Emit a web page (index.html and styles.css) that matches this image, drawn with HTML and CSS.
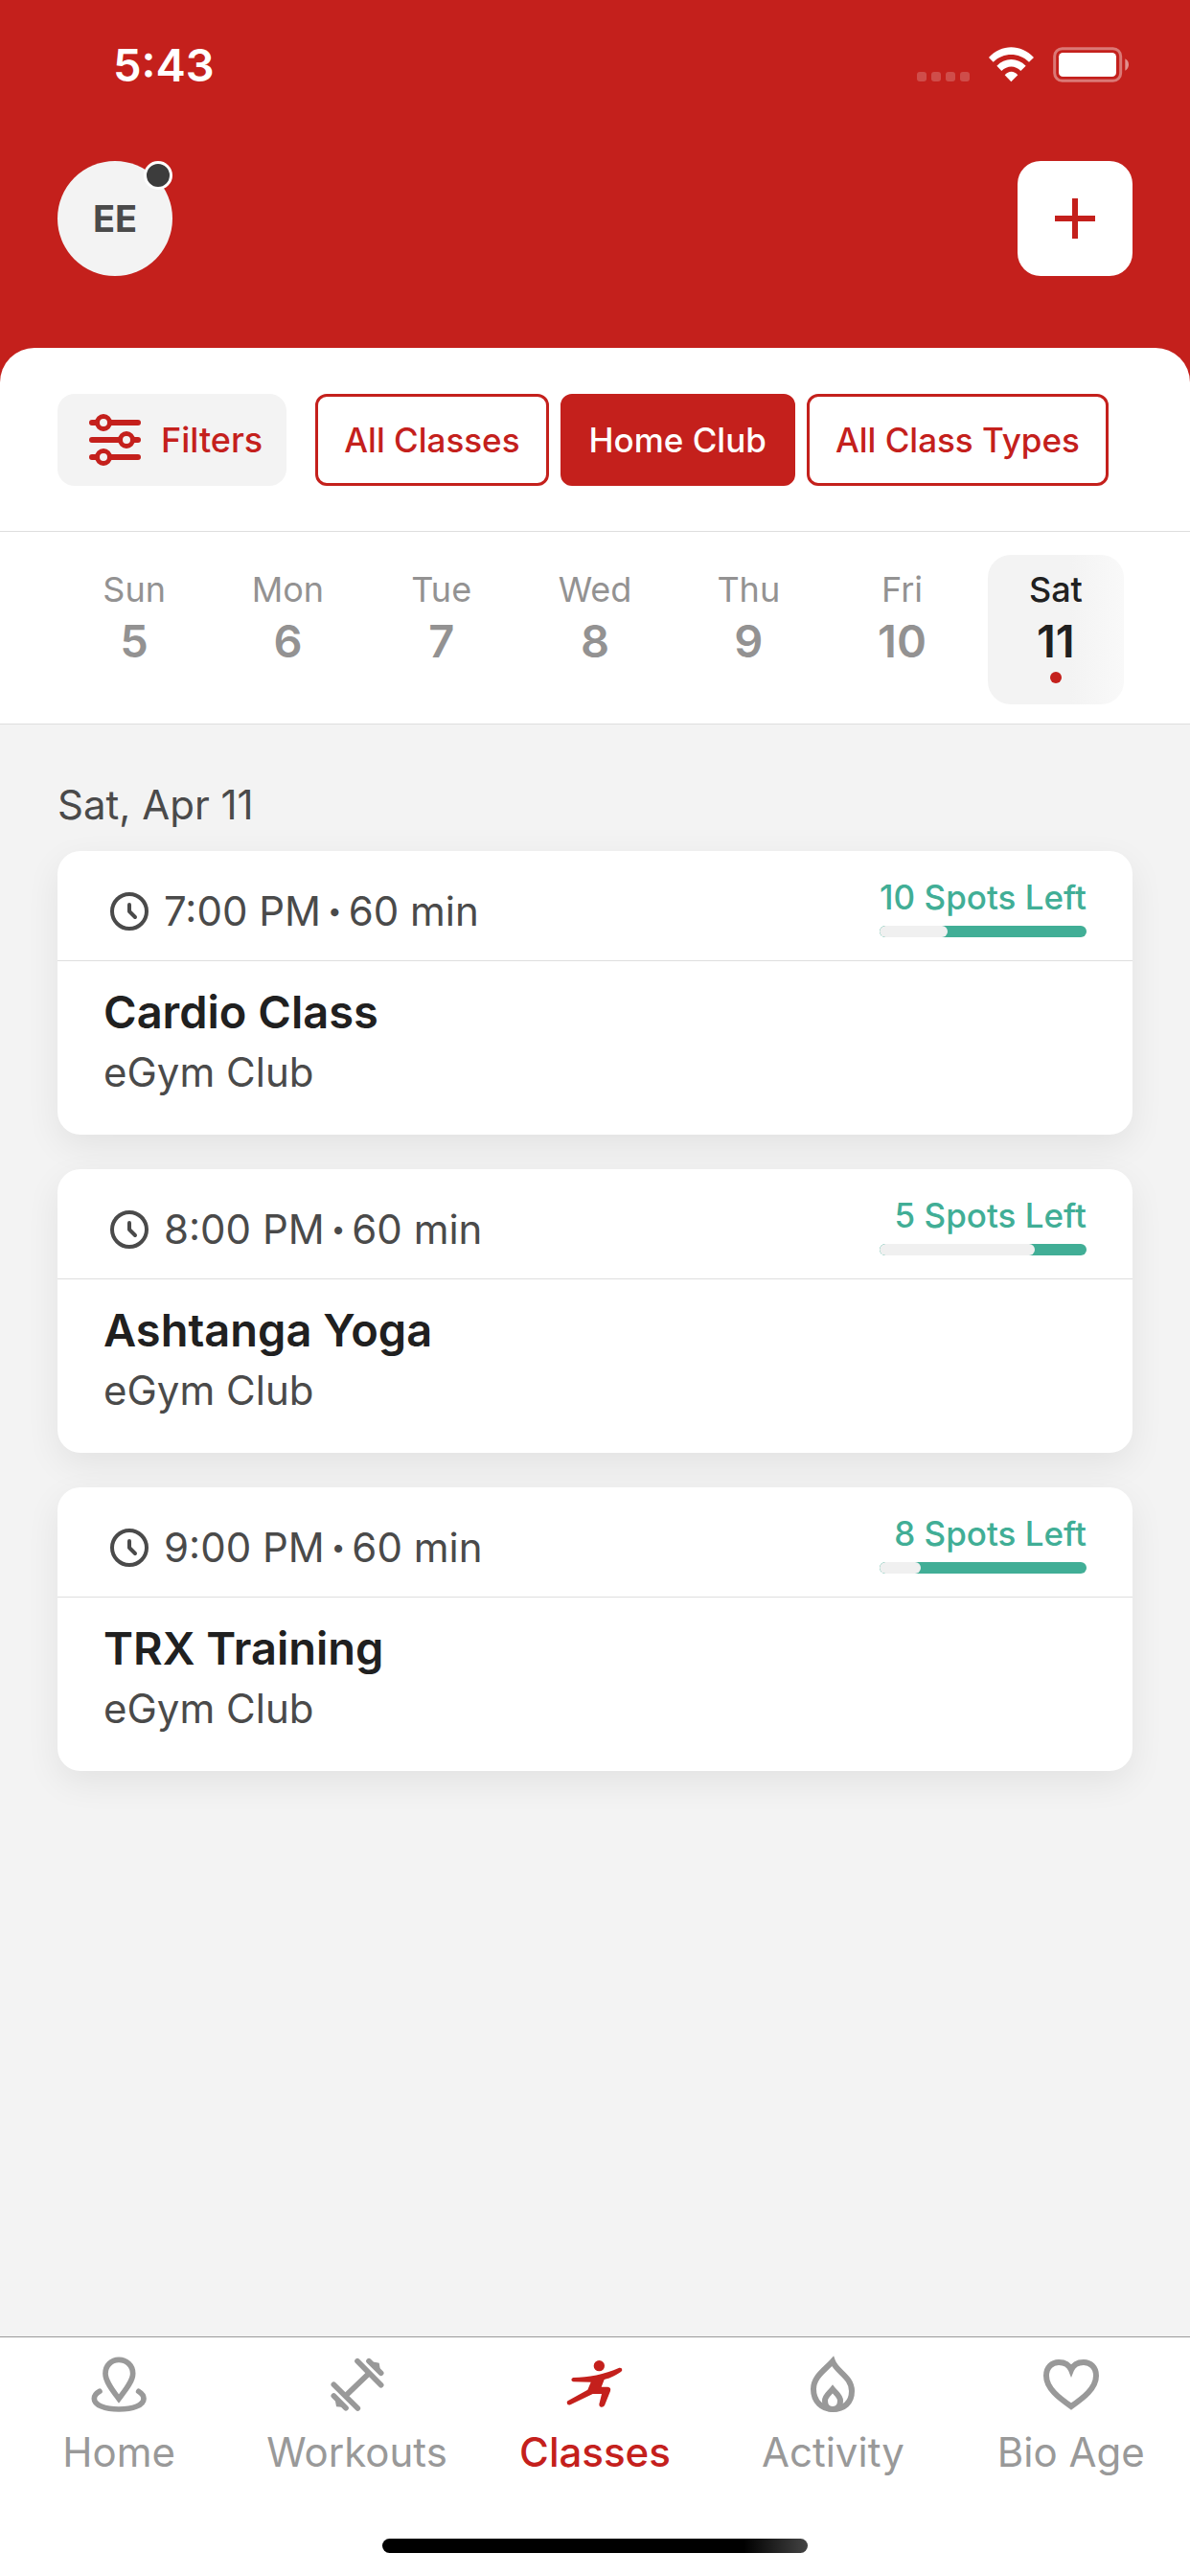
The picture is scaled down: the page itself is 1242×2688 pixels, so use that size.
FILE: index.html
```html
<!DOCTYPE html>
<html lang="en">
<head>
    <meta charset="UTF-8">
    <meta name="viewport" content="width=device-width, initial-scale=1.0">
    <title>Classes</title>
    <link rel="stylesheet" href="styles.css">
</head>
<body>
    <header class="header">
        <div class="status-bar">
            <span class="clock">5:43</span>
            <svg class="status-icons" viewBox="51 27 663 111" fill="#fff">
                <g opacity=".2">
                    <rect x="51" y="105" width="30" height="30" rx="9"/>
                    <rect x="96" y="105" width="30" height="30" rx="9"/>
                    <rect x="141" y="105" width="30" height="30" rx="9"/>
                    <rect x="186" y="105" width="30" height="30" rx="9"/>
                </g>
                <path d="M276 60C315 17 377 17 417 60L402 74C370 43 322 43 290 74Z"/>
                <path d="M301 86C326 59 366 59 392 86L376 102C359 84 334 84 316 102Z"/>
                <path d="M326 115C338 101 355 101 367 115L346 136Z"/>
                <rect x="482" y="32" width="207" height="101" rx="24" fill="none" stroke="#fff" stroke-width="9" opacity=".4"/>
                <rect x="495" y="45" width="180" height="75" rx="13"/>
                <path d="M703 64Q714 70 714 82Q714 95 703 101Z" opacity=".5"/>
            </svg>
        </div>
        <div class="top-row">
            <button class="avatar" aria-label="Profile">EE<span class="badge"></span></button>
            <button class="add" aria-label="Add">
                <svg viewBox="0 0 42 42" width="42" height="42" stroke="#c4201c" stroke-width="6">
                    <path d="M21 0V42M0 21H42"/>
                </svg>
            </button>
        </div>
        <div class="panel">
            <div class="filter-row">
                <button class="filters">
                    <svg class="icon" viewBox="0 0 54 54" fill="#f3f3f3" stroke="#c4201c" stroke-linecap="round">
                        <path stroke-width="6" d="M3 9H51M3 27H51M3 45H51"/>
                        <g stroke-width="5">
                            <circle cx="15" cy="9" r="6.5"/>
                            <circle cx="39" cy="27" r="6.5"/>
                            <circle cx="15" cy="45" r="6.5"/>
                        </g>
                    </svg>
                    Filters
                </button>
                <div class="chips">
                    <button class="chip">All Classes</button>
                    <button class="chip selected">Home Club</button>
                    <button class="chip">All Class Types</button>
                </div>
            </div>
            <div class="days">
                <button class="day">Sun<span class="num">5</span></button>
                <button class="day">Mon<span class="num">6</span></button>
                <button class="day">Tue<span class="num">7</span></button>
                <button class="day">Wed<span class="num">8</span></button>
                <button class="day">Thu<span class="num">9</span></button>
                <button class="day">Fri<span class="num">10</span></button>
                <button class="day today">Sat<span class="num">11</span><span class="dot"></span></button>
            </div>
        </div>
    </header>

    <main>
        <h2>Sat, Apr 11</h2>
        <div class="cards">
            <article class="card">
                <div class="card-top">
                    <div class="time">
                        <svg class="icon" viewBox="0 0 54 54"><circle cx="27" cy="27" r="18"/><path d="M27 20V27L33 33"/></svg>
                        <span>7:00 PM</span><span class="bullet">•</span><span>60 min</span>
                    </div>
                    <div class="spots">
                        10 Spots Left
                        <div class="bar"><div class="taken" style="width: 33%"></div></div>
                    </div>
                </div>
                <div class="card-body">
                    <h3>Cardio Class</h3>
                    <p>eGym Club</p>
                </div>
            </article>
            <article class="card">
                <div class="card-top">
                    <div class="time">
                        <svg class="icon" viewBox="0 0 54 54"><circle cx="27" cy="27" r="18"/><path d="M27 20V27L33 33"/></svg>
                        <span>8:00 PM</span><span class="bullet">•</span><span>60 min</span>
                    </div>
                    <div class="spots">
                        5 Spots Left
                        <div class="bar"><div class="taken" style="width: 75%"></div></div>
                    </div>
                </div>
                <div class="card-body">
                    <h3>Ashtanga Yoga</h3>
                    <p>eGym Club</p>
                </div>
            </article>
            <article class="card">
                <div class="card-top">
                    <div class="time">
                        <svg class="icon" viewBox="0 0 54 54"><circle cx="27" cy="27" r="18"/><path d="M27 20V27L33 33"/></svg>
                        <span>9:00 PM</span><span class="bullet">•</span><span>60 min</span>
                    </div>
                    <div class="spots">
                        8 Spots Left
                        <div class="bar"><div class="taken" style="width: 20%"></div></div>
                    </div>
                </div>
                <div class="card-body">
                    <h3>TRX Training</h3>
                    <p>eGym Club</p>
                </div>
            </article>
        </div>
    </main>

    <footer>
        <nav class="tabs">
            <a href="#home">
                <svg class="tab-icon" viewBox="43 39 180 180" stroke-width="17">
                    <path d="M133 174C115 150 91 120 91 95C91 70 110 52 133 52C157 52 177 70 177 95C177 120 151 150 133 174Z"/>
                    <path d="M73 151C62 157 56 165 56 174C56 194 90 207 133 207C178 207 211 194 211 174C211 165 205 157 195 151"/>
                </svg>
                Home
            </a>
            <a href="#workouts">
                <svg class="tab-icon" viewBox="790 39 180 180" stroke-width="17">
                    <path d="M880 56L954 131M806 130L881 204M845 163L916 95M916 56L954 94M806 165L844 203"/>
                    <path stroke-width="14" d="M932 66L942 68L944 80M818 182L820 192L832 193"/>
                </svg>
                Workouts
            </a>
            <a href="#classes" class="active">
                <svg class="tab-icon" viewBox="60 39 180 180">
                    <g fill="currentColor" stroke="none">
                        <circle cx="163" cy="71" r="17"/>
                        <path d="M82 108C130 107 178 98 226 77Q235 76 235 84Q235 87 231 90C208 106 192 111 179 114L170 137H190Q201 138 198 150L180 195Q176 202 168 200Q162 197 163 191L171 159H143L73 193Q63 196 62 186Q62 182 66 180L127 146L137 122L82 121Q76 119 76 114Q77 109 82 108Z"/>
                    </g>
                </svg>
                Classes
            </a>
            <a href="#activity">
                <svg class="tab-icon" viewBox="0 0 60 60" stroke-width="6" stroke-linejoin="miter">
                    <path d="M30 6C34 17 50 22 50 37C50 49 42 56 30 56C19 56 10 48 10 35C10 22 22 15 30 6Z"/>
                    <path d="M30 35C34 40 38 42 38 47C38 53 35 56 30 56C25 56 22 53 22 47C22 42 26 40 30 35Z"/>
                </svg>
                Activity
            </a>
            <a href="#bio-age">
                <svg class="tab-icon" viewBox="0 0 60 60" stroke-width="6" stroke-linejoin="miter">
                    <path d="M30 53C17 44 4 34 4 21C4 12 10 7 17 7C23 7 28 10 30 15C32 10 37 7 43 7C50 7 56 12 56 21C56 34 43 44 30 53Z"/>
                </svg>
                Bio Age
            </a>
        </nav>
        <div class="home-indicator"></div>
    </footer>
</body>
</html>
```
FILE: styles.css
```css
* {
    box-sizing: border-box;
}
body {
    margin: 0;
    min-height: 100vh;
    display: flex;
    flex-direction: column;
    font-family: Inter, sans-serif;
    background: #f3f3f3;
    color: #4a4a4a;
}
button {
    border: none;
    padding: 0;
    font-family: inherit;
    cursor: pointer;
}
h2, h3, p {
    margin: 0;
}
.header {
    background: #c4201c;
}
.status-bar {
    display: flex;
    justify-content: space-between;
    align-items: center;
    height: 134px;
    padding: 0 64px 0 118px;
}
.clock {
    font-size: 47px;
    font-weight: 600;
    color: #fff;
}
.status-icons {
    width: 221px;
    height: 37px;
}
.top-row {
    display: flex;
    justify-content: space-between;
    padding: 34px 60px 75px;
}
.avatar {
    position: relative;
    width: 120px;
    height: 120px;
    border-radius: 50%;
    background: #f3f3f3;
    color: #4a4a4a;
    font-size: 38px;
    font-weight: 700;
}
.badge {
    position: absolute;
    top: 0;
    right: 0;
    width: 30px;
    height: 30px;
    border: 3px solid #fff;
    border-radius: 50%;
    background: #3c3c3c;
}
.add {
    display: flex;
    align-items: center;
    justify-content: center;
    width: 120px;
    height: 120px;
    border-radius: 24px;
    background: #fff;
}
.panel {
    background: #fff;
    border-radius: 36px 36px 0 0;
}
.filter-row {
    display: flex;
    gap: 30px;
    padding: 48px 60px 47px;
    border-bottom: 1px solid #dedede;
}
.icon {
    width: 54px;
    height: 54px;
}
.filters {
    display: flex;
    align-items: center;
    gap: 21px;
    height: 96px;
    padding: 0 25px 0 33px;
    border-radius: 18px;
    background: #f3f3f3;
    color: #c4201c;
    font-size: 36px;
    font-weight: 500;
}
.chips {
    display: flex;
    gap: 12px;
}
.chip {
    height: 96px;
    padding: 0 27px;
    border: 3px solid #c4201c;
    border-radius: 12px;
    background: #fff;
    color: #c4201c;
    font-size: 35px;
    font-weight: 500;
}
.chip.selected {
    background: #c4201c;
    color: #fff;
}
.days {
    display: grid;
    grid-template-columns: repeat(7, 1fr);
    padding: 24px 60px 20px;
    border-bottom: 1px solid #dedede;
}
.day {
    display: flex;
    flex-direction: column;
    align-items: center;
    height: 156px;
    margin: 0 9px;
    padding-top: 14px;
    border-radius: 24px;
    background: none;
    color: #939292;
    font-size: 36px;
    line-height: 44px;
}
.num {
    font-size: 47px;
    font-weight: 600;
    line-height: 64px;
}
.day.today {
    background: linear-gradient(to right, #f3f3f3 60%, #f9f9f9);
    color: #202020;
    font-weight: 500;
}
.dot {
    width: 12px;
    height: 12px;
    border-radius: 50%;
    background: #c4201c;
}
main {
    flex: 1;
    padding: 58px 60px;
}
h2 {
    margin-bottom: 22px;
    font-size: 42px;
    font-weight: 400;
    line-height: 52px;
}
.cards {
    display: flex;
    flex-direction: column;
    gap: 36px;
}
.card {
    border-radius: 24px;
    background: #fff;
    box-shadow: 0 12px 36px rgba(0, 0, 0, 0.07);
}
.card-top {
    display: flex;
    justify-content: space-between;
    align-items: flex-end;
    padding: 26px 48px 24px;
    border-bottom: 1px solid #dedede;
}
.time {
    display: flex;
    align-items: center;
    gap: 7px;
    font-size: 42px;
    line-height: 54px;
}
.time .icon {
    margin-right: 2px;
    fill: none;
    stroke: #4a4a4a;
    stroke-width: 4;
    stroke-linecap: round;
    stroke-linejoin: round;
}
.bullet {
    font-size: 26px;
}
.spots {
    color: #41ae96;
    font-size: 35px;
    font-weight: 500;
    line-height: 44px;
    text-align: right;
}
.bar {
    width: 216px;
    height: 12px;
    margin: 8px 0 0 auto;
    border-radius: 6px;
    background: #41ae96;
    overflow: hidden;
}
.taken {
    height: 12px;
    border-radius: 6px;
    background: #f0f0f0;
}
.card-body {
    padding: 24px 48px 39px;
}
h3 {
    margin-bottom: 8px;
    color: #202020;
    font-size: 47px;
    font-weight: 600;
    line-height: 58px;
}
p {
    font-size: 42px;
    line-height: 52px;
}
footer {
    border-top: 1px solid #999;
    background: #fff;
}
.tabs {
    display: grid;
    grid-template-columns: repeat(5, 1fr);
    padding: 19px 0 64px;
}
.tabs a {
    display: flex;
    flex-direction: column;
    align-items: center;
    gap: 15px;
    color: #999;
    font-size: 42px;
    line-height: 52px;
    text-decoration: none;
}
.tabs a.active {
    color: #c4201c;
    font-weight: 500;
}
.tab-icon {
    width: 60px;
    height: 60px;
    fill: none;
    stroke: currentColor;
    stroke-linecap: round;
}
.home-indicator {
    width: 444px;
    height: 15px;
    margin: 0 auto 24px;
    border-radius: 8px;
    background: linear-gradient(to right, #000 85%, #444);
}
```
